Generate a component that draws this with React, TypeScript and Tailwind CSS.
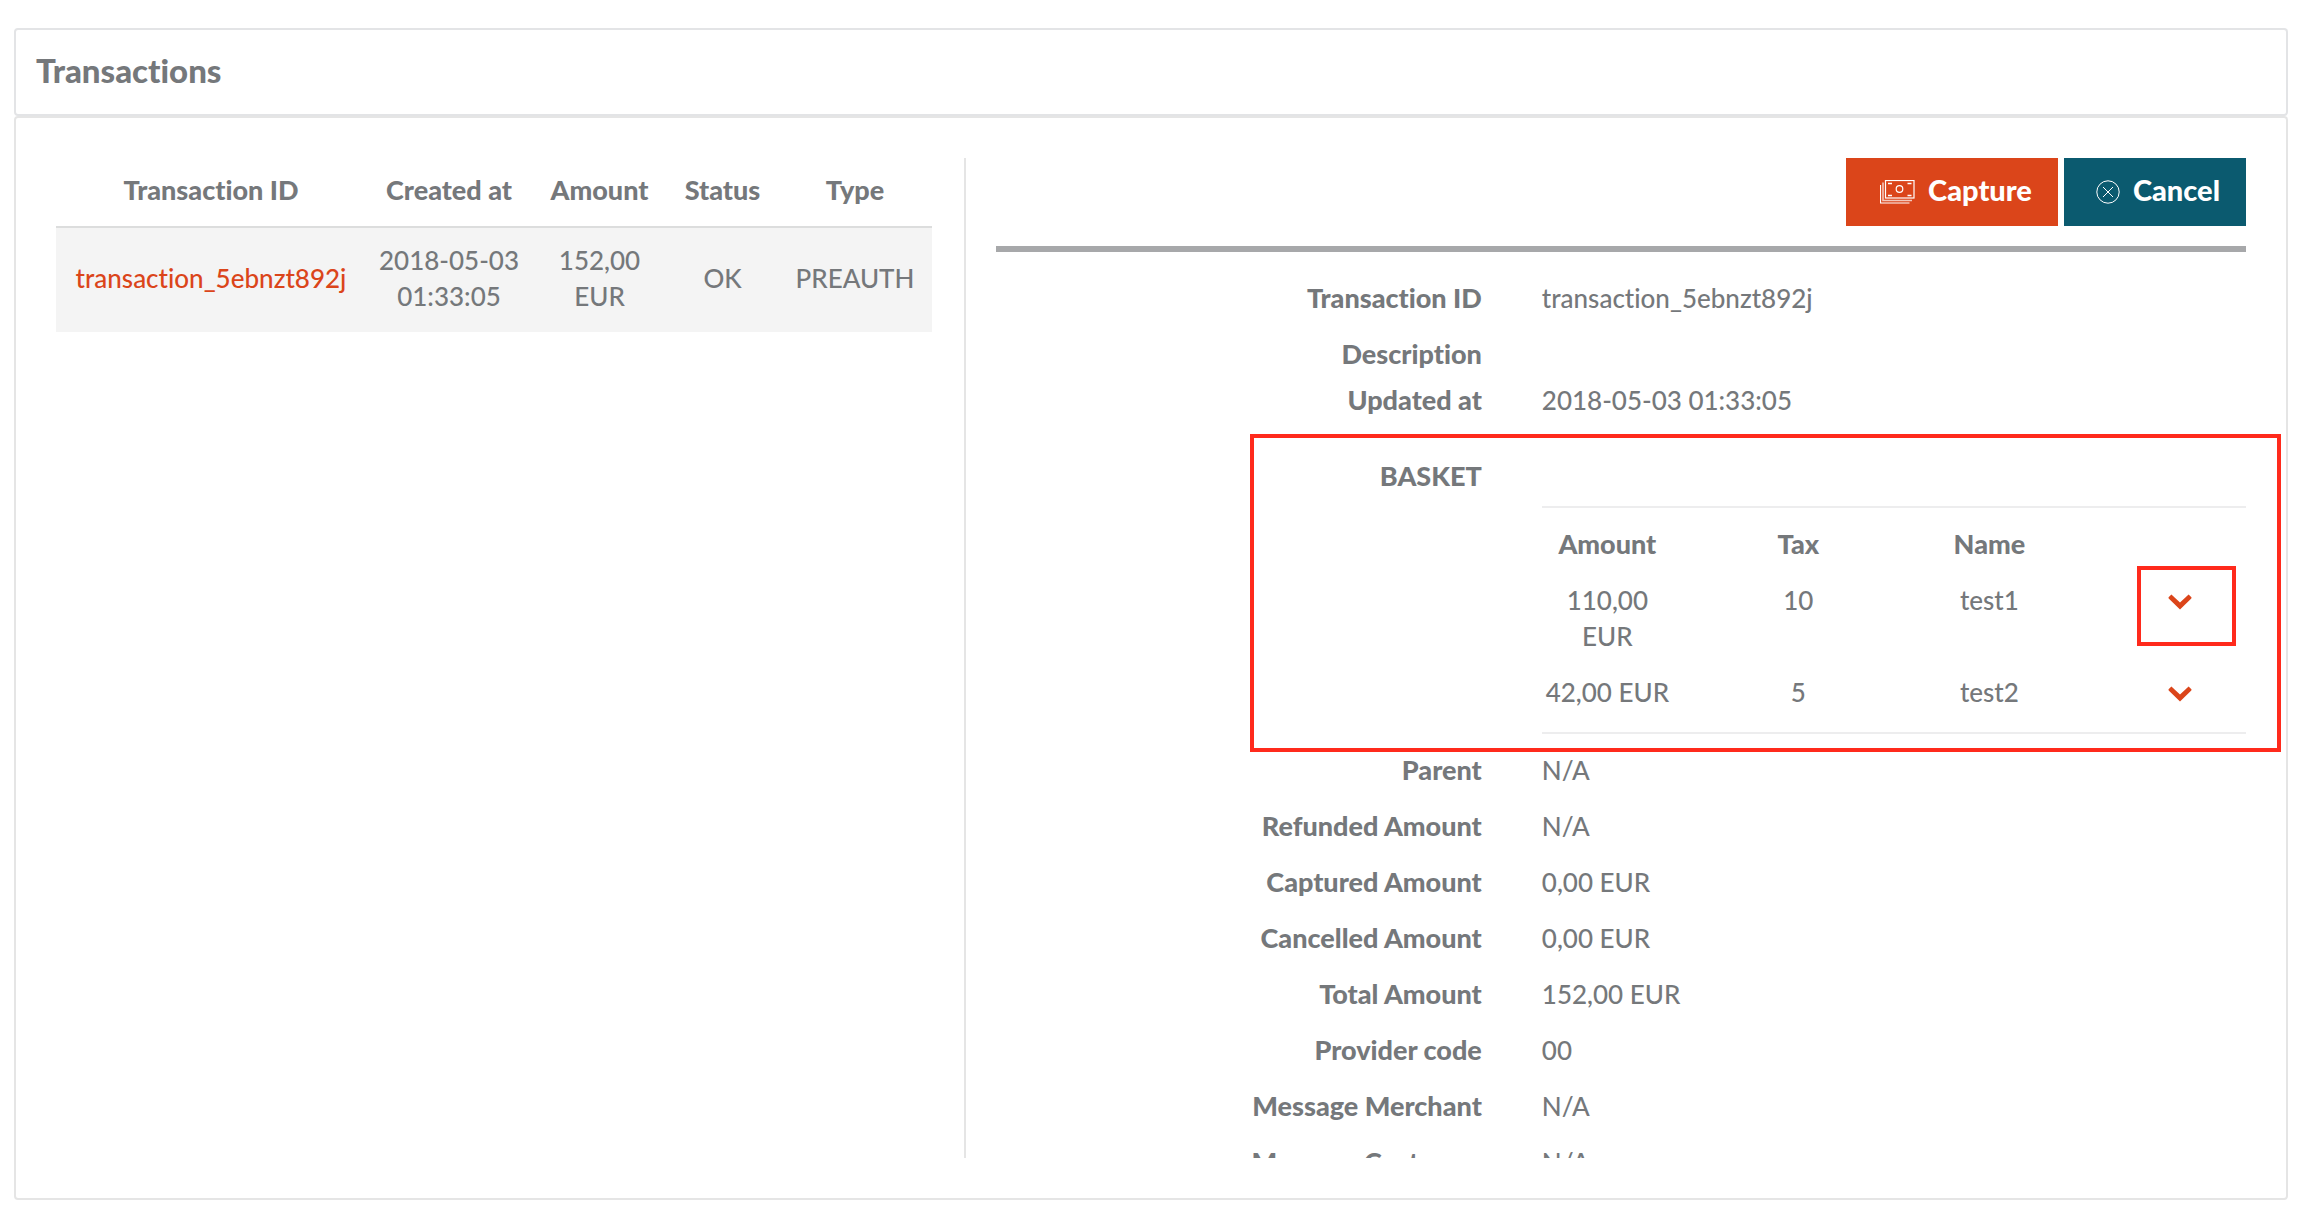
import type { ReactNode } from "react";

type Transaction = {
  id: string;
  createdAt: string;
  amount: string;
  status: string;
  type: string;
};

type BasketItem = {
  amount: string;
  tax: number;
  name: string;
};

const transactions: Transaction[] = [
  {
    id: "transaction_5ebnzt892j",
    createdAt: "2018-05-03 01:33:05",
    amount: "152,00 EUR",
    status: "OK",
    type: "PREAUTH",
  },
];

const basket: BasketItem[] = [
  { amount: "110,00 EUR", tax: 10, name: "test1" },
  { amount: "42,00 EUR", tax: 5, name: "test2" },
];

const details = [
  { label: "Parent", value: "N/A" },
  { label: "Refunded Amount", value: "N/A" },
  { label: "Captured Amount", value: "0,00 EUR" },
  { label: "Cancelled Amount", value: "0,00 EUR" },
  { label: "Total Amount", value: "152,00 EUR" },
  { label: "Provider code", value: "00" },
  { label: "Message Merchant", value: "N/A" },
  { label: "Message Customer", value: "N/A" },
];

const MoneyIcon = () => (
  <svg className="mt-1" width="35" height="24" viewBox="0 0 35 24" fill="none" stroke="currentColor" aria-hidden="true">
    <rect x="5.5" y="0.5" width="28.5" height="17.5" strokeWidth="1.2" />
    <path d="M3 2.5v18h29" strokeWidth="1.6" strokeOpacity="0.7" />
    <path d="M0.5 5v18h29" strokeWidth="1.2" />
    <circle cx="19.5" cy="9" r="3.3" strokeWidth="1.2" />
    <path d="M8 3.5h4M27.5 3.5h4M8 15.5h4M27.5 15.5h4" strokeWidth="1.3" />
  </svg>
);

const CancelIcon = () => (
  <svg className="mt-1" width="24" height="24" viewBox="0 0 24 24" fill="none" stroke="currentColor" aria-hidden="true">
    <circle cx="12" cy="12" r="11.2" />
    <path d="M7 7l10 10M17 7L7 17" />
  </svg>
);

const ChevronIcon = () => (
  <svg width="24" height="16" viewBox="0 0 24 16" fill="currentColor" aria-hidden="true">
    <path d="M3.4 0.4L12 8.6L20.6 0.4L23.4 3.2Q23.7 3.8 23.3 4.4L12 15.4L0.7 4.4Q0.3 3.8 0.6 3.2Z" />
  </svg>
);

const DetailRow = ({ label, children }: { label: string; children?: ReactNode }) => (
  <div className="flex">
    <dt className="mb-[10px] w-5/12 px-[30px] text-right text-[27px] leading-9 font-black">{label}</dt>
    <dd className="w-7/12 px-[30px]">{children}</dd>
  </div>
);

const TransactionTable = () => (
  <table className="w-full text-center">
    <thead>
      <tr className="border-b-2 border-[#dcdddd] text-[27px] leading-9">
        <th className="w-[310px] px-4 pt-[14px] pb-[18px] font-black">Transaction ID</th>
        <th className="w-[166px] px-2 pt-[14px] pb-[18px] font-black">Created at</th>
        <th className="w-[135px] px-4 pt-[14px] pb-[18px] font-black">Amount</th>
        <th className="w-[111px] px-4 pt-[14px] pb-[18px] font-black">Status</th>
        <th className="px-4 pt-[14px] pb-[18px] font-black">Type</th>
      </tr>
    </thead>
    <tbody>
      {transactions.map((t) => (
        <tr key={t.id} className="bg-[#f4f4f4]">
          <td className="px-4 pt-[14px] pb-[18px]">
            <a href="#" className="text-[#db451a]">
              {t.id}
            </a>
          </td>
          <td className="px-2 pt-[14px] pb-[18px]">{t.createdAt}</td>
          <td className="px-4 pt-[14px] pb-[18px]">{t.amount}</td>
          <td className="px-4 pt-[14px] pb-[18px]">{t.status}</td>
          <td className="px-4 pt-[14px] pb-[18px]">{t.type}</td>
        </tr>
      ))}
    </tbody>
  </table>
);

const Basket = () => (
  <div className="relative flex pt-5">
    <dt className="w-5/12 px-[30px] text-right text-[27px] leading-9 font-black">BASKET</dt>
    <dd className="w-7/12 px-[30px]">
      <div className="mt-12 mb-[18px] border-y-2 border-[#ededee] pt-2 pb-3">
        <div className="-mx-[30px]">
          <table className="w-full table-fixed text-center">
            <thead>
              <tr className="text-[27px] leading-9">
                <th className="px-[30px] py-[10px] font-black">Amount</th>
                <th className="px-[30px] py-[10px] font-black">Tax</th>
                <th className="px-[30px] py-[10px] font-black">Name</th>
                <td />
              </tr>
            </thead>
            <tbody>
              {basket.map((item, i) => (
                <tr key={item.name} className="align-top">
                  <td className="px-[30px] py-[10px]">{item.amount}</td>
                  <td className="px-[30px] py-[10px]">{item.tax}</td>
                  <td className="px-[30px] py-[10px]">{item.name}</td>
                  <td className="relative px-[30px] pt-3">
                    <button
                      type="button"
                      aria-label={`Show ${item.name}`}
                      className="inline-flex h-9 items-center align-top text-[#db451a]"
                    >
                      <ChevronIcon />
                    </button>
                    {i === 0 && (
                      <div className="pointer-events-none absolute -top-[6px] right-10 h-20 w-[99px] border-4 border-[#ff2a1c]" />
                    )}
                  </td>
                </tr>
              ))}
            </tbody>
          </table>
        </div>
      </div>
    </dd>
    <div className="pointer-events-none absolute -top-1 -right-[5px] bottom-0 left-[284px] border-4 border-[#ff2a1c]" />
  </div>
);

export default function App() {
  return (
    <main className="min-h-screen bg-white pt-7 pr-[30px] pb-[30px] pl-[14px] font-['Lato',sans-serif] text-[26px] leading-9 font-medium text-[#75787b] [font-variant-ligatures:none]">
      <header className="rounded border-2 border-[#e3e4e6] px-5 pt-[22px] pb-[26px]">
        <h1 className="text-[33px] leading-9 font-black">Transactions</h1>
      </header>
      <section className="flex rounded border-2 border-[#e5e5e5] p-10">
        <div className="w-2/5">
          <TransactionTable />
        </div>
        <div className="ml-8 h-[1000px] flex-1 overflow-y-clip border-l-2 border-[#e5e5e5] pl-[30px]">
          <div className="flex justify-end gap-[6px] border-b-[6px] border-[#a7a8aa] pb-5 text-[29px] leading-9 font-black text-white">
            <button type="button" className="flex items-center gap-[13px] bg-[#db451a] pt-[14px] pr-[26px] pb-[18px] pl-[34px]">
              <MoneyIcon />
              Capture
            </button>
            <button type="button" className="flex items-center gap-[13px] bg-[#0b5a6f] pt-[14px] pr-[26px] pb-[18px] pl-8">
              <CancelIcon />
              Cancel
            </button>
          </div>
          <dl className="-mx-[30px] mt-7">
            <DetailRow label="Transaction ID">
              <p className="mb-5">transaction_5ebnzt892j</p>
            </DetailRow>
            <DetailRow label="Description" />
            <DetailRow label="Updated at">
              <p className="mb-5">2018-05-03 01:33:05</p>
            </DetailRow>
            <Basket />
            {details.map((d) => (
              <DetailRow key={d.label} label={d.label}>
                <p className="mb-5">{d.value}</p>
              </DetailRow>
            ))}
          </dl>
        </div>
      </section>
    </main>
  );
}
